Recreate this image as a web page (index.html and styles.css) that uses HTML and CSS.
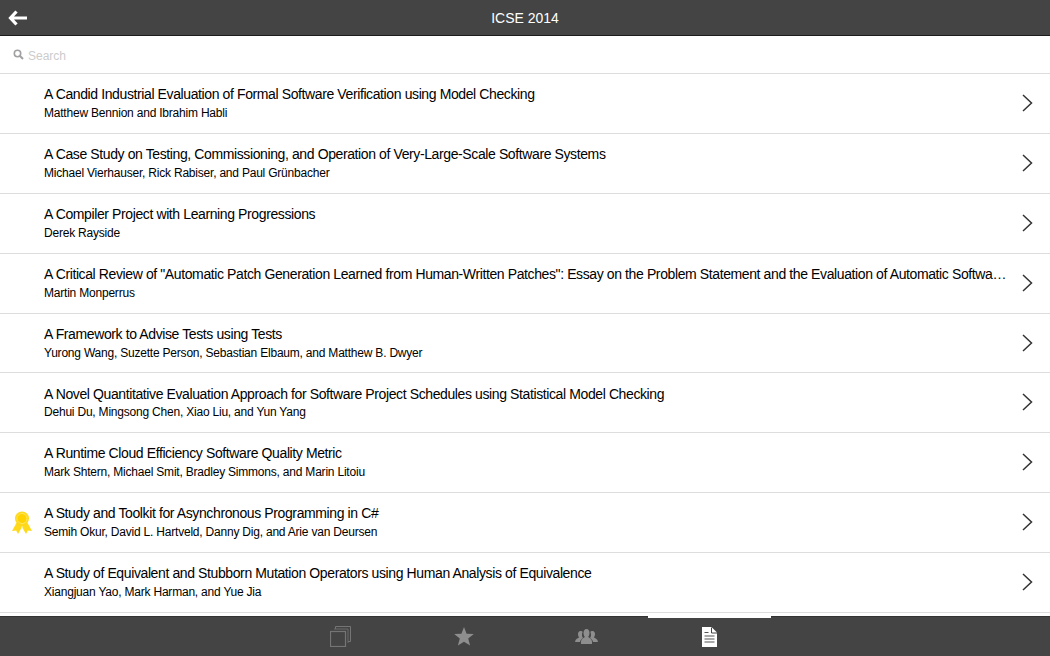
FILE: index.html
```html
<!DOCTYPE html>
<html lang="en">
<head>
<meta charset="utf-8">
<title>ICSE 2014</title>
<link rel="stylesheet" href="styles.css">
</head>
<body>
<div class="app">
  <header class="topbar">
    <svg class="back" width="20" height="16" viewBox="0 0 20 16"><path d="M8.500 1.500 2.500 8l6 6.500M3 8h16" fill="none" stroke="#fff" stroke-width="3.200"/></svg>
    <h1 class="title">ICSE 2014</h1>
  </header>
  <div class="search">
    <svg class="search-icon" width="11" height="11" viewBox="0 0 11 11"><circle cx="4.500" cy="4.500" r="3.200" fill="none" stroke="#a0a0a0" stroke-width="1.600"/><path d="M7 7l3 3" stroke="#a0a0a0" stroke-width="2"/></svg>
    <span class="placeholder">Search</span>
  </div>
  <main class="list">
    <div class="row"><div class="badge"></div><div class="text"><div class="name">A Candid Industrial Evaluation of Formal Software Verification using Model Checking</div><div class="authors">Matthew Bennion and Ibrahim Habli</div></div><svg class="chev" width="11" height="18" viewBox="0 0 11 18"><path d="M1 1l8.500 8L1 17" fill="none" stroke="#333" stroke-width="1.500"/></svg></div>
    <div class="row"><div class="badge"></div><div class="text"><div class="name">A Case Study on Testing, Commissioning, and Operation of Very-Large-Scale Software Systems</div><div class="authors">Michael Vierhauser, Rick Rabiser, and Paul Grünbacher</div></div><svg class="chev" width="11" height="18" viewBox="0 0 11 18"><path d="M1 1l8.500 8L1 17" fill="none" stroke="#333" stroke-width="1.500"/></svg></div>
    <div class="row"><div class="badge"></div><div class="text"><div class="name">A Compiler Project with Learning Progressions</div><div class="authors">Derek Rayside</div></div><svg class="chev" width="11" height="18" viewBox="0 0 11 18"><path d="M1 1l8.500 8L1 17" fill="none" stroke="#333" stroke-width="1.500"/></svg></div>
    <div class="row"><div class="badge"></div><div class="text"><div class="name">A Critical Review of "Automatic Patch Generation Learned from Human-Written Patches": Essay on the Problem Statement and the Evaluation of Automatic Software Repair</div><div class="authors">Martin Monperrus</div></div><svg class="chev" width="11" height="18" viewBox="0 0 11 18"><path d="M1 1l8.500 8L1 17" fill="none" stroke="#333" stroke-width="1.500"/></svg></div>
    <div class="row"><div class="badge"></div><div class="text"><div class="name">A Framework to Advise Tests using Tests</div><div class="authors">Yurong Wang, Suzette Person, Sebastian Elbaum, and Matthew B. Dwyer</div></div><svg class="chev" width="11" height="18" viewBox="0 0 11 18"><path d="M1 1l8.500 8L1 17" fill="none" stroke="#333" stroke-width="1.500"/></svg></div>
    <div class="row"><div class="badge"></div><div class="text"><div class="name">A Novel Quantitative Evaluation Approach for Software Project Schedules using Statistical Model Checking</div><div class="authors">Dehui Du, Mingsong Chen, Xiao Liu, and Yun Yang</div></div><svg class="chev" width="11" height="18" viewBox="0 0 11 18"><path d="M1 1l8.500 8L1 17" fill="none" stroke="#333" stroke-width="1.500"/></svg></div>
    <div class="row"><div class="badge"></div><div class="text"><div class="name">A Runtime Cloud Efficiency Software Quality Metric</div><div class="authors">Mark Shtern, Michael Smit, Bradley Simmons, and Marin Litoiu</div></div><svg class="chev" width="11" height="18" viewBox="0 0 11 18"><path d="M1 1l8.500 8L1 17" fill="none" stroke="#333" stroke-width="1.500"/></svg></div>
    <div class="row"><div class="badge"><svg width="20" height="24" viewBox="0 0 20 24"><path d="M5 11 0 20l4.200-.6L6 23l4-7 4 7 1.800-3.600L20 20l-5-9z" fill="#ffd91a"/><circle cx="10" cy="7.500" r="7" fill="#ffd91a"/><circle cx="10" cy="7.500" r="5" fill="#ffd200" stroke="#ffe766" stroke-width="1"/><path d="M10 15v2" stroke="#fff" stroke-width=".7"/></svg></div><div class="text"><div class="name">A Study and Toolkit for Asynchronous Programming in C#</div><div class="authors">Semih Okur, David L. Hartveld, Danny Dig, and Arie van Deursen</div></div><svg class="chev" width="11" height="18" viewBox="0 0 11 18"><path d="M1 1l8.500 8L1 17" fill="none" stroke="#333" stroke-width="1.500"/></svg></div>
    <div class="row"><div class="badge"></div><div class="text"><div class="name">A Study of Equivalent and Stubborn Mutation Operators using Human Analysis of Equivalence</div><div class="authors">Xiangjuan Yao, Mark Harman, and Yue Jia</div></div><svg class="chev" width="11" height="18" viewBox="0 0 11 18"><path d="M1 1l8.500 8L1 17" fill="none" stroke="#333" stroke-width="1.500"/></svg></div>
  </main>
  <nav class="tabs">
    <div class="tab"><svg width="21" height="21" viewBox="0 0 21 21"><path d="M5.500 3V.500h15v15H18" fill="none" stroke="#757575"/><path d="M4 3h14v14" fill="none" stroke="#6a6a6a"/><rect x=".5" y="5.500" width="15" height="15" fill="none" stroke="#757575" stroke-width="1.200"/></svg></div>
    <div class="tab"><svg width="20" height="19" viewBox="0 0 20 19"><path d="M10 0l2.600 6.700 7.200.4-5.600 4.500 1.900 7L10 14.700l-6.100 3.900 1.900-7L.2 7.100l7.200-.4z" fill="#8e8e8e"/></svg></div>
    <div class="tab"><svg width="23" height="15" viewBox="0 0 23 15"><g fill="#8e8e8e"><path d="M5.500 2C3.800 2 3 3.500 3 5c0 1.500.5 2.500 1.200 3.300C3 9.500.500 10 .200 12v1H5c.2-2 1.500-3 3-4-.7-1-1-2-1-3.500 0-1.200.3-2 .7-2.500C7.300 2.300 6.500 2 5.500 2z"/><path d="M17.500 2c1.700 0 2.500 1.500 2.500 3 0 1.500-.5 2.500-1.200 3.300C20 9.500 22.500 10 22.800 12v1H18c-.2-2-1.500-3-3-4 .7-1 1-2 1-3.500 0-1.200-.3-2-.7-2.500.4-.7 1.200-1 2.200-1z"/><path d="M11.500 0C9.500 0 8.500 1.800 8.500 4c0 1.800.6 3 1.400 4-1.600 1.300-3.600 1.800-3.900 4.500V15h11v-2.500c-.3-2.700-2.300-3.200-3.900-4.500.8-1 1.400-2.200 1.400-4 0-2.200-1-4-3-4z"/></g></svg></div>
    <div class="tab tab-active"><svg width="15" height="20" viewBox="0 0 15 20"><path d="M0 0h9.500L15 5.500V20H0z" fill="#fff"/><path d="M9.500 0.500V6H15" fill="none" stroke="#444" stroke-width="1"/><path d="M2.500 5.500h4M2.500 9h10M2.500 12h10M2.500 15h10" stroke="#555" stroke-width="1.200"/></svg></div>
    <div class="tab-spacer"></div>
  </nav>
</div>
</body>
</html>
```
FILE: styles.css
```css
* { box-sizing: border-box; }
html, body { margin: 0; padding: 0; height: 100%; overflow: hidden; }
body { font-family: "Liberation Sans", Arial, sans-serif; background: #fff; color: #000; }
.app { width: 1050px; height: 656px; display: flex; flex-direction: column; }
.topbar { height: 36px; flex: none; background: #444; border-bottom: 1px solid #1c1c1c; display: flex; align-items: center; justify-content: center; position: relative; }
.back { position: absolute; left: 8px; top: 10px; }
.title { margin: 0; font-size: 14px; font-weight: 400; color: #fff; }
.search { height: 38px; flex: none; border-bottom: 1px solid #ddd; display: flex; align-items: center; padding: 2px 0 0 13px; gap: 4px; }
.search-icon { margin-top: -3px; }
.placeholder { font-size: 12px; color: #ccc; }
.list { flex: 1; min-height: 0; overflow: hidden; }
.row { height: 59.9px; border-bottom: 1px solid #ddd; display: flex; align-items: center; }
.badge { width: 44px; flex: none; padding-left: 12px; display: flex; }
.text { flex: 1; min-width: 0; padding-top: 1.1px; }
.name { font-size: 14px; letter-spacing: -0.39px; line-height: 20px; white-space: nowrap; overflow: hidden; text-overflow: ellipsis; margin-top: -2px; }
.authors { font-size: 12px; letter-spacing: -0.21px; line-height: 17px; margin-top: 0.9px; }
.chev { flex: none; margin: -1px 17px 0 14px; }
.tabs { height: 40px; flex: none; background: #444; display: flex; border-top: 1px solid #333; padding-left: 279px; }
.tab { width: 123px; display: flex; align-items: center; justify-content: center; }
.tab-active { border-top: 2px solid #fff; margin-top: -1px; }
.tab-spacer { flex: 1; }
```
